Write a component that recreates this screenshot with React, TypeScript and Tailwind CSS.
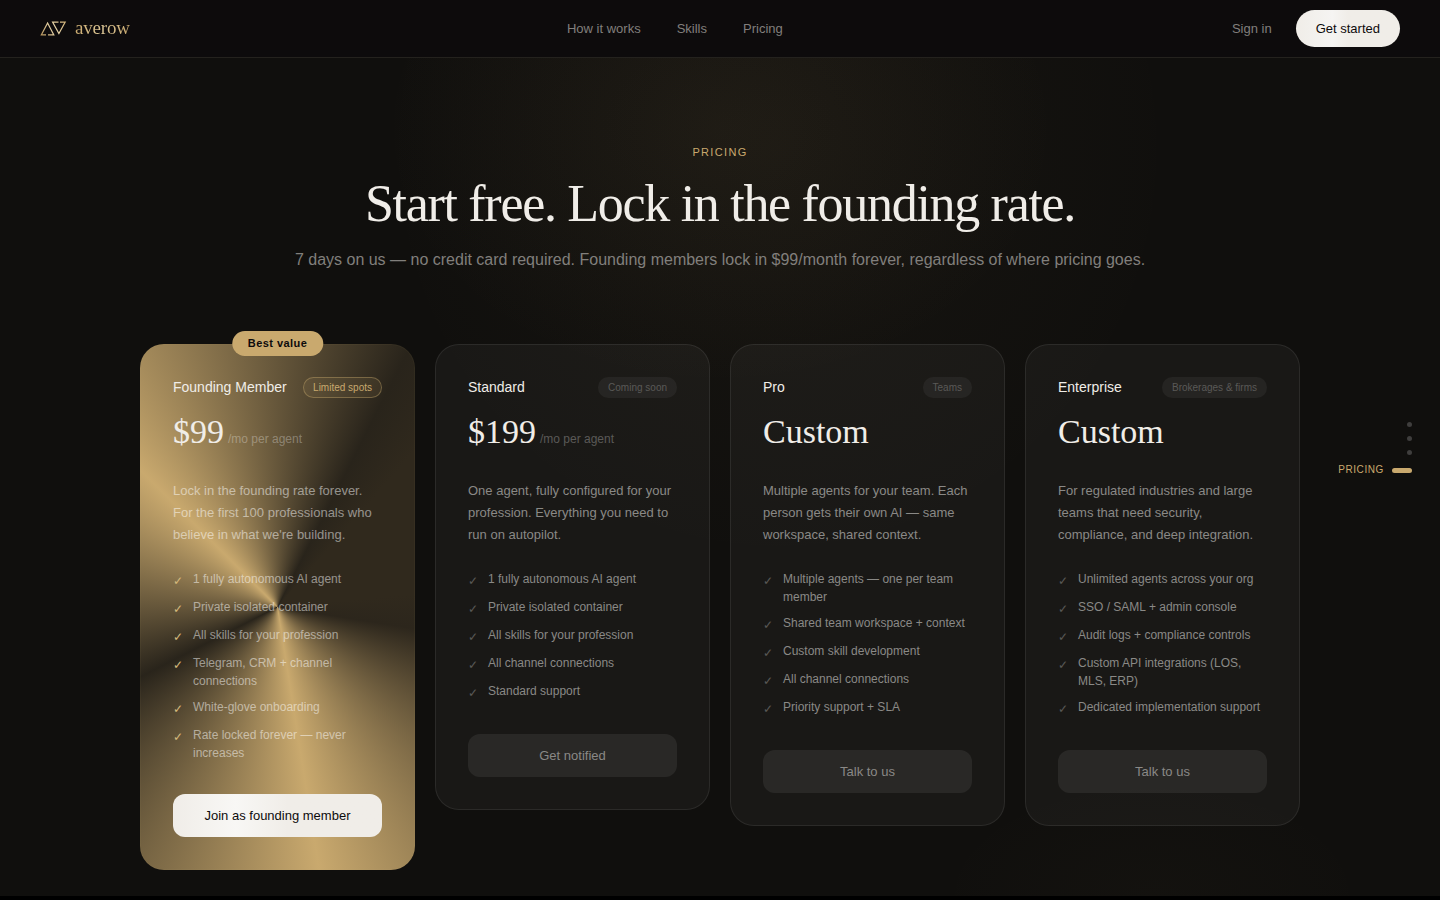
import { clsx } from "clsx"

interface Plan {
    name: string
    badge: string
    price: string
    unit?: string
    description: string
    features: string[]
    cta: string
    featured?: boolean
}

const NAV_LINKS = ["How it works", "Skills", "Pricing"]

const SECTIONS = ["Intro", "How it works", "Skills", "Pricing"]

const PLANS: Plan[] = [
    {
        name: "Founding Member",
        badge: "Limited spots",
        price: "$99",
        unit: "/mo per agent",
        description: "Lock in the founding rate forever. For the first 100 professionals who believe in what we're building.",
        features: [
            "1 fully autonomous AI agent",
            "Private isolated container",
            "All skills for your profession",
            "Telegram, CRM + channel connections",
            "White-glove onboarding",
            "Rate locked forever — never increases",
        ],
        cta: "Join as founding member",
        featured: true,
    },
    {
        name: "Standard",
        badge: "Coming soon",
        price: "$199",
        unit: "/mo per agent",
        description: "One agent, fully configured for your profession. Everything you need to run on autopilot.",
        features: [
            "1 fully autonomous AI agent",
            "Private isolated container",
            "All skills for your profession",
            "All channel connections",
            "Standard support",
        ],
        cta: "Get notified",
    },
    {
        name: "Pro",
        badge: "Teams",
        price: "Custom",
        description: "Multiple agents for your team. Each person gets their own AI — same workspace, shared context.",
        features: [
            "Multiple agents — one per team member",
            "Shared team workspace + context",
            "Custom skill development",
            "All channel connections",
            "Priority support + SLA",
        ],
        cta: "Talk to us",
    },
    {
        name: "Enterprise",
        badge: "Brokerages & firms",
        price: "Custom",
        description: "For regulated industries and large teams that need security, compliance, and deep integration.",
        features: [
            "Unlimited agents across your org",
            "SSO / SAML + admin console",
            "Audit logs + compliance controls",
            "Custom API integrations (LOS, MLS, ERP)",
            "Dedicated implementation support",
        ],
        cta: "Talk to us",
    },
]

function Logo() {
    return (
        <a href="#" className="flex items-center gap-2">
            <svg width="27" height="17" viewBox="0 0 27 17" fill="none" aria-hidden="true">
                <defs>
                    <linearGradient id="gold" x1="0" y1="17" x2="27" y2="0" gradientUnits="userSpaceOnUse">
                        <stop offset="0" stopColor="#b08d52" />
                        <stop offset="0.5" stopColor="#e8d6ac" />
                        <stop offset="1" stopColor="#c9a96e" />
                    </linearGradient>
                </defs>
                <g stroke="url(#gold)" strokeWidth="1.2">
                    <path d="M6 14.9H1.3L7.6 3L13.8 14.9H8" />
                    <path d="M18.5 2.1H12.6L18.9 13.6L25.2 2.1H20" />
                </g>
            </svg>
            <span className="bg-linear-to-r from-[#c9a96e] via-[#dcc797] to-[#c9a96e] bg-clip-text pb-0.5 font-['Liberation_Serif',serif] text-[19px] leading-6 tracking-[-0.01em] text-transparent">
                averow
            </span>
        </a>
    )
}

function Header() {
    return (
        <header className="relative z-10 flex h-[58px] items-center justify-between border-b border-[#24221e] bg-[#0d0b0c] px-10">
            <Logo />
            <nav className="flex gap-9 pr-3">
                {NAV_LINKS.map((link) => (
                    <a key={link} href="#" className="text-[13px] leading-5 text-[#817f7c]">{link}</a>
                ))}
            </nav>
            <div className="flex items-center gap-6">
                <a href="#" className="text-[13px] leading-5 text-[#817f7c]">Sign in</a>
                <button className="h-[37px] rounded-full bg-linear-to-r from-[#f0ede8] via-[#f5f4f2] via-35% to-[#f0ede8] to-50% px-5 text-[13px] text-[#0d0b0c]">
                    Get started
                </button>
            </div>
        </header>
    )
}

function PlanCard({ plan }: { plan: Plan }) {
    const { featured } = plan

    return (
        <article
            className={clsx(
                "relative rounded-3xl border p-8",
                featured
                    ? "border-[#c9a96e]/5 bg-[conic-gradient(from_171deg,#c9a96e,#29241b_20%,#c9a96e_40%,#29241b_60%,#30291d_64%,#30291d_76%,#2c261c_80%,#c9a96e)] bg-origin-border"
                    : "border-white/8 bg-white/4"
            )}
        >
            {featured && (
                <span className="absolute -top-3.5 left-1/2 -translate-x-1/2 rounded-full bg-[#c9a96e] px-4 py-1 text-[11px] leading-[17px] font-bold tracking-[0.04em] whitespace-nowrap text-[#0d0b0c]">
                    Best value
                </span>
            )}

            <div className="flex items-start justify-between">
                <h2 className="text-[14px] leading-5 text-[#f0ede8]">{plan.name}</h2>
                <span
                    className={clsx(
                        "rounded-full border px-[9px] text-[10px] leading-[19px] whitespace-nowrap",
                        featured
                            ? "border-[#c9a96e]/40 bg-[#c9a96e]/10 text-[#c9a96e]"
                            : "border-transparent bg-white/5 text-[#5a5957]"
                    )}
                >
                    {plan.badge}
                </span>
            </div>

            <p className="mt-3 flex items-baseline gap-1">
                <span className="font-['Liberation_Serif',serif] text-[34px] leading-11 text-[#f0ede8]">{plan.price}</span>
                {plan.unit && (
                    <span className={clsx("text-[12px] leading-5", featured ? "text-white/30" : "text-[#5a5957]")}>{plan.unit}</span>
                )}
            </p>

            <p className={clsx("mt-6.5 text-[13px] leading-[22px]", featured ? "text-white/50" : "text-[#8a8986]")}>
                {plan.description}
            </p>

            <ul className={clsx("mt-6 flex flex-col gap-2 text-[12px] leading-[18px]", featured ? "text-white/50" : "text-[#8a8986]")}>
                {plan.features.map((feature) => (
                    <li key={feature} className="flex gap-2.5">
                        <span className={clsx("mt-0.5", featured ? "text-[#d4b87c]" : "text-[#5a5957]")}>✓</span>
                        {feature}
                    </li>
                ))}
            </ul>

            <button
                className={clsx(
                    "mt-8 h-[43px] w-full rounded-xl text-[13px]",
                    featured
                        ? "bg-linear-to-r from-[#f0ede8] via-[#f8f7f5] via-30% to-[#f0ede8] to-55% text-[#0d0b0c]"
                        : "bg-white/7 text-[#8a8986]"
                )}
            >
                {plan.cta}
            </button>
        </article>
    )
}

function SectionDots() {
    return (
        <nav aria-label="Sections" className="absolute top-[422px] right-7 flex flex-col items-end gap-[9px]">
            {SECTIONS.map((section) =>
                section === "Pricing" ? (
                    <a key={section} href="#pricing" className="flex items-center gap-2 text-[10px] leading-3 tracking-[0.06em] text-[#c9a96e] uppercase">
                        {section}
                        <span className="h-[5px] w-5 rounded-full bg-[#c9a96e]" />
                    </a>
                ) : (
                    <a key={section} href="#" aria-label={section} className="size-[5px] rounded-full bg-[#3f3e3d]" />
                )
            )}
        </nav>
    )
}

export default function App() {
    return (
        <div className="relative min-h-screen bg-black font-['Liberation_Sans',Arial,sans-serif]">
            <Header />
            <main
                id="pricing"
                className="bg-[#100f0d] bg-[radial-gradient(ellipse_340px_260px_at_50%_70px,rgba(201,169,110,0.05),transparent),radial-gradient(ellipse_400px_420px_at_54%_90px,rgba(201,169,110,0.04),transparent),radial-gradient(ellipse_220px_120px_at_80%_100%,rgba(201,169,110,0.02),transparent)] px-10 pt-[86px] pb-[26px]"
            >
                <div className="text-center">
                    <p className="text-[11px] leading-4 tracking-[0.12em] text-[#c9a96e] uppercase">Pricing</p>
                    <h1 className="mt-4 font-['Liberation_Serif',serif] text-[52px] leading-14 tracking-tight text-[#f0ede8]">
                        Start free. Lock in the founding rate.
                    </h1>
                    <p className="mt-4 text-[16px] leading-6 text-[#817f7c]">
                        7 days on us — no credit card required. Founding members lock in $99/month forever, regardless of where pricing goes.
                    </p>
                </div>

                <div className="mx-auto mt-18 grid max-w-[1160px] grid-cols-4 items-start gap-5">
                    {PLANS.map((plan) => (
                        <PlanCard key={plan.name} plan={plan} />
                    ))}
                </div>
            </main>
            <SectionDots />
        </div>
    )
}
